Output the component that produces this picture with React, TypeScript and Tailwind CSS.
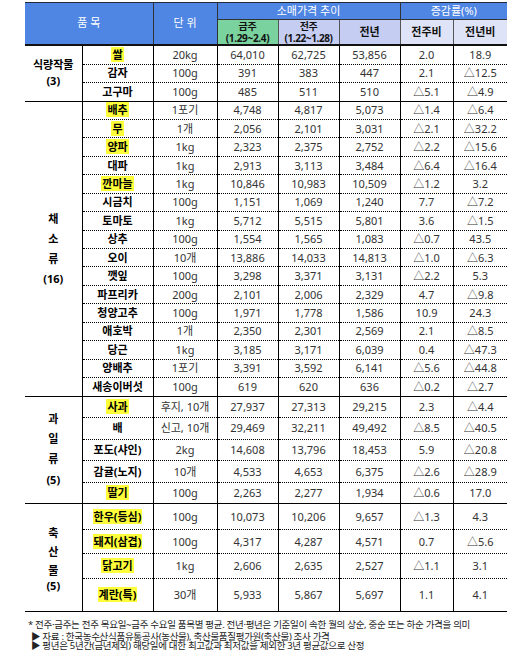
const FONT = "font-['Noto_Sans','Noto_Sans_CJK_KR',sans-serif]";

type Row = {
  name: string;
  hl?: boolean;
  unit: string;
  vals: string[];
};

type Group = {
  label: string[];
  labelGap: string;
  count: string;
  countGap: string;
  heights: string[];
  rows: Row[];
};

const groups: Group[] = [
  {
    label: ["식량작물"],
    labelGap: "leading-[16px]",
    count: "(3)",
    countGap: "leading-[16px]",
    heights: ["h-[19px]", "h-[18px]", "h-[19px]"],
    rows: [
      { name: "쌀", hl: true, unit: "20kg", vals: ["64,010", "62,725", "53,856", "2.0", "18.9"] },
      { name: "감자", unit: "100g", vals: ["391", "383", "447", "2.1", "△12.5"] },
      { name: "고구마", unit: "100g", vals: ["485", "511", "510", "△5.1", "△4.9"] },
    ],
  },
  {
    label: ["채", "소", "류"],
    labelGap: "leading-[20px]",
    count: "(16)",
    countGap: "leading-[20px]",
    heights: Array(16).fill("h-[18.45px]"),
    rows: [
      { name: "배추", hl: true, unit: "1포기", vals: ["4,748", "4,817", "5,073", "△1.4", "△6.4"] },
      { name: "무", hl: true, unit: "1개", vals: ["2,056", "2,101", "3,031", "△2.1", "△32.2"] },
      { name: "양파", hl: true, unit: "1kg", vals: ["2,323", "2,375", "2,752", "△2.2", "△15.6"] },
      { name: "대파", unit: "1kg", vals: ["2,913", "3,113", "3,484", "△6.4", "△16.4"] },
      { name: "깐마늘", hl: true, unit: "1kg", vals: ["10,846", "10,983", "10,509", "△1.2", "3.2"] },
      { name: "시금치", unit: "100g", vals: ["1,151", "1,069", "1,240", "7.7", "△7.2"] },
      { name: "토마토", unit: "1kg", vals: ["5,712", "5,515", "5,801", "3.6", "△1.5"] },
      { name: "상추", unit: "100g", vals: ["1,554", "1,565", "1,083", "△0.7", "43.5"] },
      { name: "오이", unit: "10개", vals: ["13,886", "14,033", "14,813", "△1.0", "△6.3"] },
      { name: "깻잎", unit: "100g", vals: ["3,298", "3,371", "3,131", "△2.2", "5.3"] },
      { name: "파프리카", unit: "200g", vals: ["2,101", "2,006", "2,329", "4.7", "△9.8"] },
      { name: "청양고추", unit: "100g", vals: ["1,971", "1,778", "1,586", "10.9", "24.3"] },
      { name: "애호박", unit: "1개", vals: ["2,350", "2,301", "2,569", "2.1", "△8.5"] },
      { name: "당근", unit: "1kg", vals: ["3,185", "3,171", "6,039", "0.4", "△47.3"] },
      { name: "양배추", unit: "1포기", vals: ["3,391", "3,592", "6,141", "△5.6", "△44.8"] },
      { name: "새송이버섯", unit: "100g", vals: ["619", "620", "636", "△0.2", "△2.7"] },
    ],
  },
  {
    label: ["과", "일", "류"],
    labelGap: "leading-[20px]",
    count: "(5)",
    countGap: "leading-[22px]",
    heights: Array(5).fill("h-[21.6px]"),
    rows: [
      { name: "사과", hl: true, unit: "후지, 10개", vals: ["27,937", "27,313", "29,215", "2.3", "△4.4"] },
      { name: "배", unit: "신고, 10개", vals: ["29,469", "32,211", "49,492", "△8.5", "△40.5"] },
      { name: "포도(샤인)", unit: "2kg", vals: ["14,608", "13,796", "18,453", "5.9", "△20.8"] },
      { name: "감귤(노지)", unit: "10개", vals: ["4,533", "4,653", "6,375", "△2.6", "△28.9"] },
      { name: "딸기", hl: true, unit: "100g", vals: ["2,263", "2,277", "1,934", "△0.6", "17.0"] },
    ],
  },
  {
    label: ["축", "산", "물"],
    labelGap: "leading-[19px]",
    count: "(5)",
    countGap: "leading-[12px]",
    heights: ["h-[26px]", "h-[24px]", "h-[25px]", "h-[33px]"],
    rows: [
      { name: "한우(등심)", hl: true, unit: "100g", vals: ["10,073", "10,206", "9,657", "△1.3", "4.3"] },
      { name: "돼지(삼겹)", hl: true, unit: "100g", vals: ["4,317", "4,287", "4,571", "0.7", "△5.6"] },
      { name: "닭고기", hl: true, unit: "1kg", vals: ["2,606", "2,635", "2,527", "△1.1", "3.1"] },
      { name: "계란(특)", hl: true, unit: "30개", vals: ["5,933", "5,867", "5,697", "1.1", "4.1"] },
    ],
  },
];

export default function App() {
  return (
    <div className={`${FONT} w-[522px] h-[661px] bg-white pt-[2px] pl-[25px] text-[11px] text-black`}>
      <table className="w-[482px] table-fixed border-collapse">
        <colgroup>
          <col className="w-[57px]" />
          <col className="w-[71px]" />
          <col className="w-[64px]" />
          <col className="w-[61px]" />
          <col className="w-[61px]" />
          <col className="w-[61px]" />
          <col className="w-[53px]" />
          <col className="w-[54px]" />
        </colgroup>
        <thead>
          <tr className="h-[17px]">
            <th
              colSpan={2}
              rowSpan={2}
              className="border-t border-r border-t-[#1f2937] border-r-[#333] bg-[#4f86e3] font-normal text-white"
            >
              품 목
            </th>
            <th
              rowSpan={2}
              className="border-t border-r border-t-[#1f2937] border-r-[#333] bg-[#4f86e3] font-normal text-white"
            >
              단 위
            </th>
            <th
              colSpan={3}
              className="border-t border-r border-b border-t-[#1f2937] border-r-[#333] border-b-[#333] bg-[#4f86e3] font-normal leading-[14px] text-white"
            >
              소매가격 추이
            </th>
            <th
              colSpan={2}
              className="border-t border-b border-t-[#1f2937] border-b-[#333] bg-[#4f86e3] font-normal leading-[14px] text-white"
            >
              증감률(%)
            </th>
          </tr>
          <tr className="h-[25px] border-b-2 border-b-[#111]">
            <th className="border-r border-r-[#555] bg-[#7ad39f] p-0 text-[10px] font-bold leading-[12px] tracking-[-0.3px] text-[#111]">
              금주
              <br />
              (1.29~2.4)
            </th>
            <th className="border-r border-r-[#555] bg-[#c6cdf2] p-0 text-[10px] font-bold leading-[12px] tracking-[-0.4px] text-[#111]">
              전주
              <br />
              (1.22~1.28)
            </th>
            <th className="border-r border-r-[#555] bg-[#c6cdf2] font-bold text-[#111]">전년</th>
            <th className="border-r border-r-[#555] bg-[#dfe3f7] font-bold text-[#111]">전주비</th>
            <th className="bg-[#dfe3f7] font-bold text-[#111]">전년비</th>
          </tr>
        </thead>
        {groups.map((g) => (
          <tbody key={g.label.join("")} className="border-b border-b-black">
            {g.rows.map((r, i) => (
              <tr
                key={r.name}
                className={`${g.heights[i]} ${i < g.rows.length - 1 ? "border-b border-dotted border-b-black" : ""}`}
              >
                {i === 0 && (
                  <td rowSpan={g.rows.length} className="border-r border-r-black p-0 text-center align-middle font-bold">
                    <div className="flex flex-col items-center">
                      {g.label.map((c) => (
                        <span key={c} className={g.labelGap}>
                          {c}
                        </span>
                      ))}
                      <span className={g.countGap}>{g.count}</span>
                    </div>
                  </td>
                )}
                <td className="border-r border-r-black p-0 text-center font-bold leading-[14px]">
                  <span className={r.hl ? "bg-[#ffff3a] px-[1px]" : ""}>{r.name}</span>
                </td>
                <td className="border-r border-r-black p-0 text-center leading-[14px] text-[#333]">{r.unit}</td>
                {r.vals.map((v, k) => (
                  <td
                    key={k}
                    className={`${k < 4 ? "border-r border-r-black" : ""} p-0 text-center leading-[14px] text-[#333]`}
                  >
                    {v}
                  </td>
                ))}
              </tr>
            ))}
          </tbody>
        ))}
      </table>
      <div className="mt-[6px] pl-[3px] text-[9.5px] tracking-[-0.3px] text-[#222]">
        <p className="leading-[13px]">
          * 전주·금주는 전주 목요일~금주 수요일 품목별 평균. 전년·평년은 기준일이 속한 월의 상순, 중순 또는 하순 가격을 의미
        </p>
        <p className="mt-[1px] pl-[3px] leading-[9px]">▶ 자료 : 한국농수산식품유통공사(농산물), 축산물품질평가원(축산물) 조사 가격</p>
        <p className="pl-[3px] leading-[9px]">▶ 평년은 5년간(금년제외) 해당일에 대한 최고값과 최저값을 제외한 3년 평균값으로 산정</p>
      </div>
    </div>
  );
}
